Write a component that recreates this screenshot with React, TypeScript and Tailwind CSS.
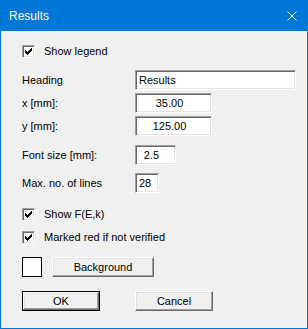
import React from 'react';

const font = { fontFamily: '"Liberation Sans", Arial, sans-serif' };

function Check() {
  // classic 7x7 tick, drawn row by row
  const rows = [
    [6, 1], [5, 2], [0, 1], [4, 3], [0, 2], [3, 3], [0, 5], [1, 3], [2, 1],
  ];
  const rects = [
    { x: 6, y: 0, w: 1 },
    { x: 5, y: 1, w: 2 },
    { x: 0, y: 2, w: 1 },
    { x: 4, y: 2, w: 3 },
    { x: 0, y: 3, w: 2 },
    { x: 3, y: 3, w: 3 },
    { x: 0, y: 4, w: 5 },
    { x: 1, y: 5, w: 3 },
    { x: 2, y: 6, w: 1 },
  ];
  void rows;
  return (
    <svg width="7" height="7" viewBox="0 0 7 7" shapeRendering="crispEdges">
      {rects.map((r, i) => (
        <rect key={i} x={r.x} y={r.y} width={r.w} height={1} fill="#000" />
      ))}
    </svg>
  );
}

function CheckBox({ label }: { label: string }) {
  return (
    <div className="flex items-center h-[13px]">
      <div className="w-[13px] h-[13px] border border-t-[#a0a0a0] border-l-[#a0a0a0] border-b-white border-r-white shadow-[inset_1px_1px_0_#696969,inset_-1px_-1px_0_#e3e3e3] bg-white flex items-center justify-center">
        <Check />
      </div>
      <span className="ml-[9px] text-[11px] text-black leading-none">{label}</span>
    </div>
  );
}

function Field({ value, w, align = 'center' }: { value: string; w: string; align?: 'left' | 'center' }) {
  return (
    <div
      className={`${w} h-[20px] bg-white border border-t-[#a0a0a0] border-l-[#a0a0a0] border-b-white border-r-white shadow-[inset_1px_1px_0_#696969,inset_-1px_-1px_0_#e3e3e3] flex items-center text-[11px] text-black ${
        align === 'left' ? 'pl-[3px]' : 'justify-center pr-2'
      }`}
    >
      {value}
    </div>
  );
}

function Row({ label, children, mt }: { label: string; children: React.ReactNode; mt: string }) {
  return (
    <div className={`flex items-center ${mt}`}>
      <span className="w-[113px] text-[11px] text-black">{label}</span>
      {children}
    </div>
  );
}

function Button({ label, w, def }: { label: string; w: string; def?: boolean }) {
  const inner = (
    <div className="h-full w-full border border-t-white border-l-white border-b-[#696969] border-r-[#696969] shadow-[inset_-1px_-1px_0_#a0a0a0,inset_1px_1px_0_#e3e3e3] bg-[#f0f0f0] flex items-center justify-center text-[11px] text-black">
      {label}
    </div>
  );
  if (def) {
    return <div className={`${w} h-[20px] border border-black`}>{inner}</div>;
  }
  return <div className={`${w} h-[20px]`}>{inner}</div>;
}

export default function App() {
  return (
    <div className="w-[308px] h-[329px] bg-[#0078d7] px-px pb-px flex flex-col" style={font}>
      {/* Title bar */}
      <div className="h-[31px] flex items-center justify-between pl-[8px] pr-[10px]">
        <span className="text-white text-[12px]">Results</span>
        <svg width="10" height="10" viewBox="0 0 10 10">
          <path d="M0.5 0.5 L9.5 9.5 M9.5 0.5 L0.5 9.5" stroke="#fff" strokeWidth="1" />
        </svg>
      </div>

      {/* Body */}
      <div className="flex-1 bg-[#f0f0f0] pl-[21px] pt-[14px] flex flex-col">
        <CheckBox label="Show legend" />

        <Row label="Heading" mt="mt-[12px]">
          <Field value="Results" w="w-[161px]" align="left" />
        </Row>
        <Row label="x [mm]:" mt="mt-[3px]">
          <Field value="35.00" w="w-[77px]" />
        </Row>
        <Row label="y [mm]:" mt="mt-[3px]">
          <Field value="125.00" w="w-[77px]" />
        </Row>

        <Row label="Font size [mm]:" mt="mt-[9px]">
          <Field value="2.5" w="w-[41px]" />
        </Row>
        <Row label="Max. no. of lines" mt="mt-[8px]">
          <Field value="28" w="w-[24px]" align="left" />
        </Row>

        <div className="mt-[15px]">
          <CheckBox label="Show F(E,k)" />
        </div>
        <div className="mt-[10px]">
          <CheckBox label="Marked red if not verified" />
        </div>

        <div className="flex items-center mt-[13px]">
          <div className="w-[20px] h-[20px] border border-black bg-white" />
          <div className="ml-[10px]">
            <Button label="Background" w="w-[102px]" />
          </div>
        </div>

        <div className="flex items-center mt-[14px]">
          <Button label="OK" w="w-[78px]" def />
          <div className="ml-[35px]">
            <Button label="Cancel" w="w-[78px]" />
          </div>
        </div>
      </div>
    </div>
  );
}
